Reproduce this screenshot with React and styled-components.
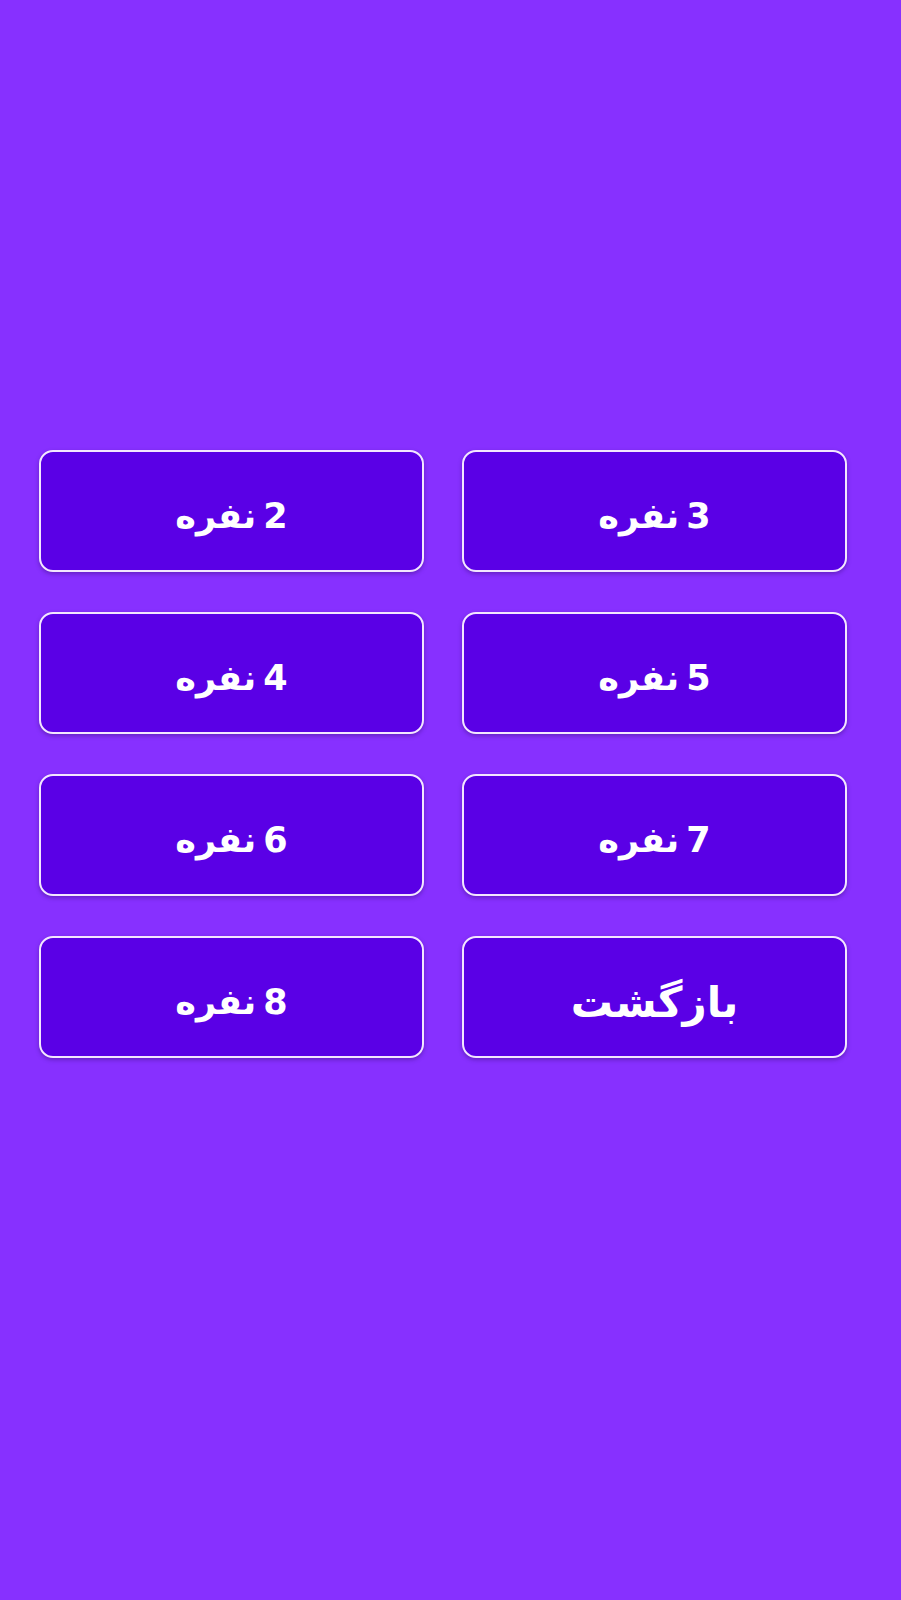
import React from 'react'
import styled, { createGlobalStyle } from 'styled-components'

const GlobalStyle = createGlobalStyle`
  html, body {
    margin: 0;
    padding: 0;
    background: #8730ff;
  }
  body {
    font-family: "DejaVu Sans", "Noto Sans", sans-serif;
  }
`

const Screen = styled.div`
  min-height: 1600px;
  background: #8730ff;
  padding: 450px 54px 0 39px;
  box-sizing: border-box;
`

const Grid = styled.div`
  display: grid;
  grid-template-columns: 385px 385px;
  column-gap: 38px;
  row-gap: 40px;
`

const OptionBtn = styled.button`
  height: 122px;
  box-sizing: border-box;
  background: #5a00e6;
  border: 2.5px solid #f3e6ff;
  border-radius: 14px;
  box-shadow: 0 2px 4px rgba(40, 0, 90, 0.35);
  color: #ffffff;
  font-family: "DejaVu Sans", "Noto Sans", sans-serif;
  font-weight: bold;
  font-size: ${p => (p.$wide ? '42px' : '35px')};
  word-spacing: -5px;
  direction: rtl;
  display: flex;
  align-items: center;
  justify-content: center;
  padding: 10px 0 0;
  cursor: pointer;
`

const options = ['2 نفره', '3 نفره', '4 نفره', '5 نفره', '6 نفره', '7 نفره', '8 نفره']

const App = () => {
  return (
    <Screen>
      <GlobalStyle />
      <Grid>
        {options.map(label => (
          <OptionBtn key={label}>{label}</OptionBtn>
        ))}
        <OptionBtn $wide>بازگشت</OptionBtn>
      </Grid>
    </Screen>
  )
}

export default App
